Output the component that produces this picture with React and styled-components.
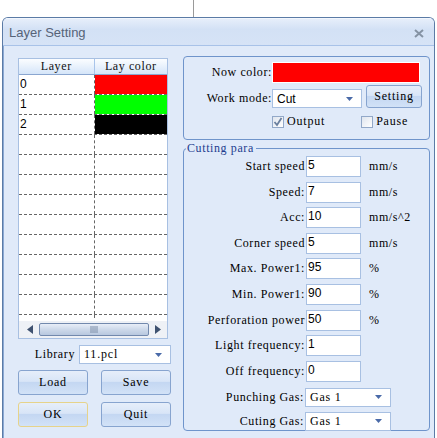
import React from 'react'
import styled, { createGlobalStyle } from 'styled-components'

const Global = createGlobalStyle`
  html, body { margin: 0; padding: 0; background: #fff; }
  body { width: 437px; height: 438px; overflow: hidden; }
`

const serif = `"Liberation Serif", "DejaVu Serif", serif`
const sans = `"Liberation Sans", "DejaVu Sans", sans-serif`

const layers = [
  { id: '0', color: '#ff0000' },
  { id: '1', color: '#00ff00' },
  { id: '2', color: '#000000' },
  ...Array.from({ length: 10 }, () => ({ id: '', color: '' })),
]

const params = [
  { label: 'Start speed', value: '5', unit: 'mm/s' },
  { label: 'Speed:', value: '7', unit: 'mm/s' },
  { label: 'Acc:', value: '10', unit: 'mm/s^2' },
  { label: 'Corner speed', value: '5', unit: 'mm/s' },
  { label: 'Max. Power1:', value: '95', unit: '%' },
  { label: 'Min. Power1:', value: '90', unit: '%' },
  { label: 'Perforation power', value: '50', unit: '%' },
  { label: 'Light frequency:', value: '1', unit: '' },
  { label: 'Off frequency:', value: '0', unit: '' },
]

function Arrow() {
  return (
    <svg width="7" height="4" viewBox="0 0 7 4">
      <path d="M0 0h7L3.5 4z" fill="#4a6aa8" />
    </svg>
  )
}

function Select({ value, width, plain }) {
  return (
    <SelectBox $width={width} $plain={plain}>
      <span>{value}</span>
      <Arrow />
    </SelectBox>
  )
}

function App() {
  return (
    <>
      <Global />
      <TopStrip><Line /></TopStrip>
      <Win>
        <TitleBar>
          <span>Layer Setting</span>
          <svg width="10" height="9" viewBox="0 0 10 9">
            <path d="M1 1l8 7M9 1L1 8" stroke="#8593a4" strokeWidth="2" />
          </svg>
        </TitleBar>
        <Body>
          <LeftCol>
            <Table>
              <HeadRow>
                <HeadCell>Layer</HeadCell>
                <HeadCell $last>Lay color</HeadCell>
              </HeadRow>
              <Rows>
                {layers.map((l, i) => (
                  <Row key={i}>
                    <IdCell>{l.id}</IdCell>
                    <ColorCell $color={l.color} />
                  </Row>
                ))}
              </Rows>
              <HScroll>
                <svg width="6" height="9" viewBox="0 0 6 9"><path d="M6 0v9L0 4.5z" fill="#3f5270" /></svg>
                <Thumb>
                  <svg width="9" height="7" viewBox="0 0 9 7">
                    <path d="M1 0v7M3 0v7M5 0v7M7 0v7" stroke="#7c8ea8" strokeWidth="1" />
                  </svg>
                </Thumb>
                <svg width="6" height="9" viewBox="0 0 6 9"><path d="M0 0v9L6 4.5z" fill="#3f5270" /></svg>
              </HScroll>
            </Table>
            <LibRow>
              <Label>Library</Label>
              <Select value="11.pcl" width={92} />
            </LibRow>
            <BtnGrid>
              <Btn>Load</Btn>
              <Btn>Save</Btn>
              <Btn $focus>OK</Btn>
              <Btn>Quit</Btn>
            </BtnGrid>
          </LeftCol>
          <RightCol>
            <Group>
              <GRow>
                <RLabel $w={88}>Now color:</RLabel>
                <Swatch />
              </GRow>
              <GRow $mt={6}>
                <RLabel $w={88}>Work mode:</RLabel>
                <Select value="Cut" width={90} plain />
                <SettingBtn>Setting</SettingBtn>
              </GRow>
              <CheckRow>
                <Check>
                  <Box>
                    <svg width="10" height="10" viewBox="0 0 10 10">
                      <path d="M1.5 5l2.5 3L8.5 1" stroke="#6a7f9e" strokeWidth="1.8" fill="none" />
                    </svg>
                  </Box>
                  Output
                </Check>
                <Check>
                  <Box />
                  Pause
                </Check>
              </CheckRow>
            </Group>
            <Fieldset>
              <Legend>Cutting para</Legend>
              <ParamGrid>
                {params.map((p) => (
                  <React.Fragment key={p.label}>
                    <RLabel>{p.label}</RLabel>
                    <Input>{p.value}</Input>
                    <Unit>{p.unit}</Unit>
                  </React.Fragment>
                ))}
              </ParamGrid>
              <GasGrid>
                <RLabel>Punching Gas:</RLabel>
                <Select value="Gas 1" width={86} />
                <RLabel>Cuting Gas:</RLabel>
                <Select value="Gas 1" width={86} />
              </GasGrid>
            </Fieldset>
          </RightCol>
        </Body>
      </Win>
    </>
  )
}

const TopStrip = styled.div`
  height: 17px;
  padding-left: 193px;
  display: flex;
`
const Line = styled.div`
  width: 1px;
  background: #9a9a9a;
`
const Win = styled.div`
  margin-left: 2px;
  width: 433px;
  height: 421px;
  box-sizing: border-box;
  border: 1px solid #5b7ba6;
  border-bottom: none;
  border-radius: 6px 6px 0 0;
  background: #e0eaf9;
  overflow: hidden;
  display: flex;
  flex-direction: column;
`
const TitleBar = styled.div`
  height: 26px;
  flex: none;
  display: flex;
  align-items: center;
  justify-content: space-between;
  padding: 0 10px 0 6px;
  background: linear-gradient(#e6eefa, #d3e1f5 40%, #d6e3f6);
  border-bottom: 1px solid #a8c2e8;
  border-top: 1px solid #f2f6fd;
  font-family: ${sans};
  font-size: 13px;
  color: #566378;
  svg { margin-top: 2px; }
`
const Body = styled.div`
  flex: 1;
  display: flex;
  gap: 12px;
  padding: 10px 0 0 14px;
  border-left: 1px solid #8ba9d4;
`
const LeftCol = styled.div`
  width: 153px;
  display: flex;
  flex-direction: column;
  padding-top: 2px;
`
const Table = styled.div`
  width: 150px;
  height: 281px;
  box-sizing: border-box;
  border: 1px solid #a8c0e2;
  background: #fff;
  display: flex;
  flex-direction: column;
`
const HeadRow = styled.div`
  height: 15px;
  flex: none;
  display: flex;
  background: linear-gradient(#fbfdff, #d5e5f9);
  border-bottom: 1px solid #8aa6d0;
`
const HeadCell = styled.div`
  width: ${(p) => (p.$last ? '73px' : '75px')};
  text-align: center;
  font-family: ${serif};
  font-size: 12px;
  letter-spacing: 0.6px;
  line-height: 15px;
  color: #111;
  border-left: ${(p) => (p.$last ? '1px solid #a8c4ea' : 'none')};
`
const Rows = styled.div`
  flex: 1;
  overflow: hidden;
  display: flex;
  flex-direction: column;
`
const Row = styled.div`
  height: 19px;
  flex: none;
  display: flex;
  border-bottom: 1px dashed #666;
`
const IdCell = styled.div`
  width: 74px;
  border-right: 1px dashed #666;
  font-family: ${sans};
  font-size: 12px;
  line-height: 19px;
  padding-left: 1px;
  color: #000;
`
const ColorCell = styled.div`
  flex: 1;
  background: ${(p) => p.$color || 'transparent'};
`
const HScroll = styled.div`
  height: 17px;
  flex: none;
  display: flex;
  align-items: center;
  gap: 6px;
  padding: 0 6px 0 8px;
  background: #eef1f6;
  border-top: 1px solid #fff;
`
const Thumb = styled.div`
  flex: 1;
  height: 13px;
  box-sizing: border-box;
  border: 1px solid #7289ad;
  border-radius: 2px;
  background: linear-gradient(#e8eef8, #cdd9ea 50%, #b8c8df);
  display: flex;
  align-items: center;
  justify-content: center;
`
const LibRow = styled.div`
  display: flex;
  align-items: center;
  justify-content: flex-end;
  gap: 4px;
  margin-top: 6px;
`
const Label = styled.span`
  font-family: ${serif};
  font-size: 12px;
  letter-spacing: 0.6px;
  color: #000;
`
const SelectBox = styled.div`
  width: ${(p) => p.$width}px;
  height: 19px;
  box-sizing: border-box;
  background: #fff;
  border: 1px solid #a8c0e2;
  display: flex;
  align-items: center;
  justify-content: space-between;
  padding: 0 8px 0 4px;
  font-family: ${(p) => (p.$plain ? sans : serif)};
  font-size: 12px;
  letter-spacing: ${(p) => (p.$plain ? '0' : '0.8px')};
  color: #000;
`
const BtnGrid = styled.div`
  display: grid;
  grid-template-columns: 70px 70px;
  column-gap: 13px;
  row-gap: 7px;
  margin-top: 6px;
`
const Btn = styled.div`
  height: 25px;
  box-sizing: border-box;
  border: 1px solid ${(p) => (p.$focus ? '#e6d38a' : '#87a4cf')};
  border-radius: 3px;
  background: linear-gradient(#e6eefa, #d8e5f7 45%, #c4d7f2 50%, #d2e2f7);
  display: flex;
  align-items: center;
  justify-content: center;
  font-family: ${serif};
  font-size: 12px;
  letter-spacing: 0.8px;
  color: #000;
`
const RightCol = styled.div`
  width: 247px;
  display: flex;
  flex-direction: column;
  gap: 1px;
`
const Group = styled.div`
  height: 84px;
  flex: none;
  box-sizing: border-box;
  border: 1px solid #6f94cb;
  border-radius: 4px;
  padding: 5px 0 0 0;
`
const GRow = styled.div`
  display: flex;
  align-items: center;
  margin-top: ${(p) => p.$mt || 0}px;
`
const RLabel = styled.span`
  width: ${(p) => (p.$w ? `${p.$w}px` : 'auto')};
  text-align: right;
  font-family: ${serif};
  font-size: 12px;
  letter-spacing: 0.6px;
  color: #000;
  white-space: nowrap;
`
const Swatch = styled.div`
  width: 148px;
  height: 21px;
  box-sizing: border-box;
  border: 1px solid #fff;
  background: #ff0000;
`
const SettingBtn = styled(Btn)`
  width: 56px;
  height: 23px;
  margin-left: 4px;
  margin-top: -5px;
`
const CheckRow = styled.div`
  display: flex;
  gap: 36px;
  padding-left: 88px;
  margin-top: 6px;
`
const Check = styled.div`
  display: flex;
  align-items: center;
  gap: 3px;
  font-family: ${serif};
  font-size: 12px;
  letter-spacing: 0.8px;
  color: #000;
`
const Box = styled.span`
  width: 12px;
  height: 12px;
  box-sizing: border-box;
  border: 1px solid #92a8c8;
  background: linear-gradient(135deg, #dfe5ee, #fff);
  display: flex;
  align-items: center;
  justify-content: center;
`
const Fieldset = styled.fieldset`
  margin: 0;
  height: 290px;
  flex: none;
  box-sizing: border-box;
  border: 1px solid #6f94cb;
  border-radius: 4px;
  padding: 1px 0 0 0;
`
const Legend = styled.legend`
  margin-left: 2px;
  padding: 0 2px 0 1px;
  font-family: ${serif};
  font-size: 12px;
  letter-spacing: 0.6px;
  line-height: 14px;
  color: #1e3d8f;
`
const ParamGrid = styled.div`
  display: grid;
  grid-template-columns: 121px 56px auto;
  row-gap: 4.6px;
  align-items: center;
`
const Input = styled.div`
  height: 21px;
  box-sizing: border-box;
  margin-left: 1px;
  background: #fff;
  border: 1px solid #a8c0e2;
  padding: 1px 0 0 1px;
  font-family: ${sans};
  font-size: 12px;
  color: #000;
`
const Unit = styled.span`
  padding-left: 8px;
  font-family: ${serif};
  font-size: 12px;
  letter-spacing: 0.6px;
  color: #000;
`
const GasGrid = styled.div`
  display: grid;
  grid-template-columns: 120px auto;
  column-gap: 1px;
  row-gap: 5px;
  align-items: center;
  margin-top: 6px;
`

export default App
